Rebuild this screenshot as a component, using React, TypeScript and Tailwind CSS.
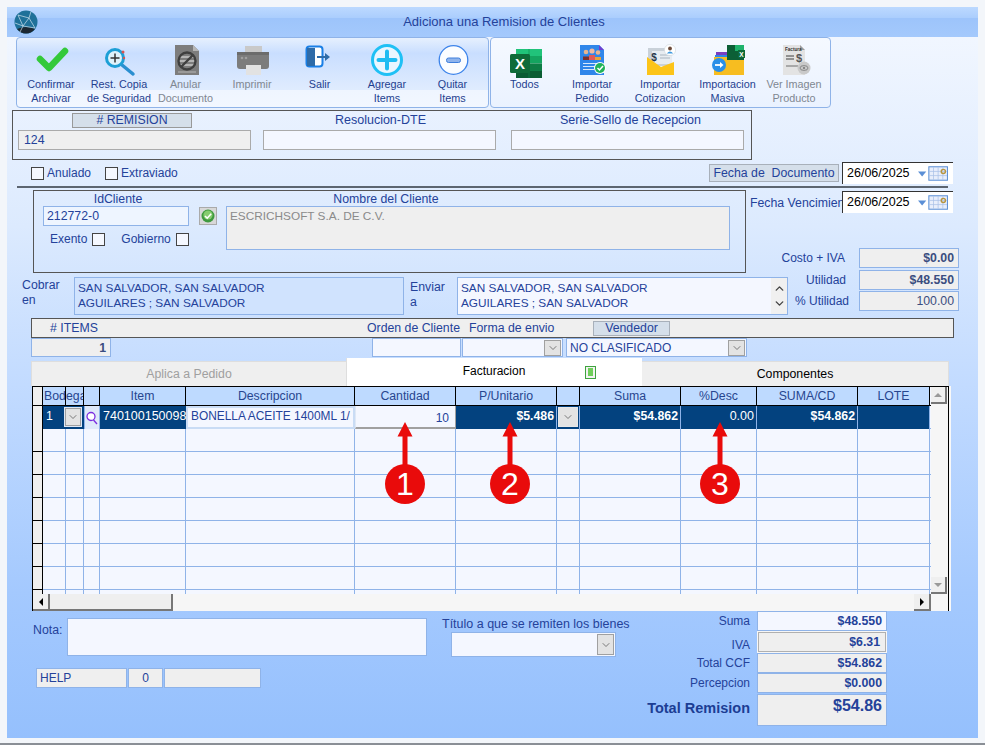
import React from 'react';
import { ChevronDown, ChevronUp } from 'lucide-react';

type IconProps = { children: React.ReactNode };
const Slot = ({ children }: IconProps) => (
  <svg width="40" height="40" viewBox="0 0 40 40" className="block mx-auto">{children}</svg>
);

const CheckIcon = () => (
  <Slot>
    <path d="M9 21 L18 30 L34 13" fill="none" stroke="#34c93a" strokeWidth="6.5" strokeLinecap="round" strokeLinejoin="round" />
  </Slot>
);
const SearchIcon = () => (
  <Slot>
    <path d="M23 27 L34 36" stroke="#2a8fd0" strokeWidth="3.5" strokeLinecap="round" />
    <circle cx="16" cy="20" r="8.5" fill="#dff3fb" stroke="#1d9fd6" strokeWidth="3" />
    <path d="M11.5 20 H20.5 M16 15.5 V24.5" stroke="#333" strokeWidth="1.5" />
    <circle cx="24" cy="14" r="1.5" fill="#d9534f" />
    <circle cx="25" cy="20" r="1.2" fill="#d9534f" />
  </Slot>
);
const AnularIcon = () => (
  <Slot>
    <path d="M9 7 H27 L33 13 V37 H9 Z" fill="#7d7d7d" />
    <path d="M27 7 L33 13 H27 Z" fill="#b5b5b5" />
    <path d="M13 19 H29 M13 23 H29 M13 27 H29" stroke="#c8c8c8" strokeWidth="1.5" />
    <circle cx="21" cy="23" r="8.5" fill="none" stroke="#3f3f3f" strokeWidth="2.4" />
    <path d="M15 29 L27 17" stroke="#3f3f3f" strokeWidth="2.4" />
    <path d="M12 34 H30" stroke="#b8b8b8" strokeWidth="1" />
  </Slot>
);
const PrinterIcon = () => (
  <Slot>
    <rect x="13" y="8" width="17" height="8" fill="#c9c9c9" />
    <rect x="5" y="14" width="32" height="17" rx="3" fill="#7c7c7c" />
    <rect x="5" y="14" width="32" height="3" fill="#6c6c6c" />
    <circle cx="10" cy="20" r="1.3" fill="#9f9f9f" />
    <circle cx="14" cy="20" r="1.3" fill="#9f9f9f" />
    <rect x="14" y="27" width="15" height="10" fill="#e2e2e2" />
  </Slot>
);
const ExitIcon = () => (
  <Slot>
    <rect x="6.5" y="8.5" width="16" height="20" rx="3" fill="#fff" stroke="#1a7fe6" strokeWidth="2" />
    <path d="M7 10 H15 V28 H7 Z" fill="#2e6ba8" />
    <path d="M17 19 H26" stroke="#2e6ba8" strokeWidth="2" />
    <path d="M25 15 L30 19 L25 23 Z" fill="#2e6ba8" />
  </Slot>
);
const PlusIcon = () => (
  <Slot>
    <circle cx="20" cy="22" r="14.5" fill="#eaf6ff" stroke="#1fc0f5" strokeWidth="3" />
    <path d="M11.5 22 H28.5 M20 13.5 V30.5" stroke="#1fbcf2" strokeWidth="4" strokeLinecap="round" />
  </Slot>
);
const MinusIcon = () => (
  <Slot>
    <circle cx="20.5" cy="22" r="14.3" fill="#fbfdff" stroke="#3d84ea" strokeWidth="1.3" />
    <rect x="13.5" y="20" width="14" height="4.5" rx="2" fill="#8fb4ec" stroke="#3f7fdc" strokeWidth="1" />
  </Slot>
);
const ExcelIcon = () => (
  <Slot>
    <rect x="11" y="11" width="26" height="7" fill="#21c37a" />
    <rect x="11" y="18" width="26" height="7.5" fill="#14a560" />
    <rect x="11" y="25.5" width="26" height="7.5" fill="#0d7d45" />
    <rect x="11" y="33" width="26" height="7" fill="#0a5c33" />
    <path d="M24 11 V40" stroke="#0e8a4e" strokeWidth="0.6" />
    <rect x="5" y="16" width="20" height="19" rx="1.5" fill="#0e6b39" />
    <text x="15" y="31" textAnchor="middle" fontSize="15" fontWeight="700" fill="#fff" fontFamily="Liberation Sans, sans-serif">X</text>
  </Slot>
);
const PedidoIcon = () => (
  <Slot>
    <path d="M8 7 H27 L32 12 V37 H8 Z" fill="#2f86ea" />
    <path d="M27 7 L32 12 H27 Z" fill="#6d3fd0" />
    <circle cx="14" cy="14" r="2.3" fill="#e8b48f" />
    <circle cx="20" cy="13" r="2.6" fill="#f0b8a0" />
    <circle cx="26" cy="14.5" r="2.3" fill="#e8b48f" />
    <path d="M11 22 V18.5 H17 V22 Z" fill="#7a2f2f" />
    <path d="M17 22 V17 H23 V22 Z" fill="#e05a5a" />
    <path d="M23 22 V19 H29 V22 Z" fill="#e8a23c" />
    <path d="M11 25.5 H29 M11 28.5 H27 M11 31.5 H22" stroke="#d7e8fc" strokeWidth="1" />
    <circle cx="28" cy="30" r="6" fill="#fff" />
    <circle cx="28" cy="30" r="5" fill="#22b35a" />
    <path d="M25.5 30 L27.5 32 L31 28" fill="none" stroke="#fff" strokeWidth="1.5" />
  </Slot>
);
const CotizIcon = () => (
  <Slot>
    <path d="M8 10 H32 V28 H8 Z" fill="#c9d1d9" />
    <rect x="12" y="13" width="20" height="13" fill="#e7ecf1" />
    <text x="14" y="23" textAnchor="middle" fontSize="10" fontWeight="700" fill="#27384a" fontFamily="Liberation Sans, sans-serif">$</text>
    <path d="M20 17 H30 M20 20 H30" stroke="#a9b4bf" strokeWidth="1" />
    <path d="M7 19 L21 29 L34 24 V37 H7 Z" fill="#fcc419" />
    <circle cx="30" cy="12" r="5.6" fill="#fff" stroke="#cfd6dc" strokeWidth="0.6" />
    <circle cx="30" cy="10.5" r="1.9" fill="#6b4a3a" />
    <path d="M26.8 15.5 Q30 11.5 33.2 15.5 Z" fill="#3f9ae0" />
  </Slot>
);
const MasivaIcon = () => (
  <Slot>
    <rect x="8" y="14" width="20" height="3" fill="#7a3fc0" />
    <rect x="7" y="17" width="22" height="3" fill="#2f86ea" />
    <path d="M6 19 H36 V37 H6 Z" fill="#f7bd20" />
    <path d="M19 7 H36 V22 H19 Z" fill="#0c5f36" />
    <path d="M27 7 H36 V13 H27 Z" fill="#1fb36c" />
    <rect x="30" y="12" width="7" height="8" fill="#0e6b39" />
    <text x="33.5" y="18.5" textAnchor="middle" fontSize="6.5" fontWeight="700" fill="#fff" fontFamily="Liberation Sans, sans-serif">X</text>
    <circle cx="11" cy="27" r="7" fill="#2a8fe8" />
    <path d="M7 27 H14" stroke="#fff" strokeWidth="1.8" />
    <path d="M12 24 L15.5 27 L12 30 Z" fill="#fff" />
  </Slot>
);
const ImagenIcon = () => (
  <Slot>
    <path d="M9 7 H26 L31 12 V37 H9 Z" fill="#e3e3e3" />
    <path d="M26 7 L31 12 H26 Z" fill="#9d9d9d" />
    <text x="11" y="12.5" fontSize="4.6" fontWeight="700" fill="#333" fontFamily="Liberation Sans, sans-serif">Factura</text>
    <path d="M12 18 H20 M12 21 H20" stroke="#777" strokeWidth="1.4" />
    <text x="25" y="24" textAnchor="middle" fontSize="11" fontWeight="700" fill="#555" fontFamily="Liberation Sans, sans-serif">$</text>
    <path d="M12 28 H24" stroke="#999" strokeWidth="1.6" />
    <circle cx="30" cy="30" r="6.5" fill="#c9c9c9" />
    <ellipse cx="30" cy="30" rx="4" ry="2.4" fill="none" stroke="#777" strokeWidth="0.8" />
    <circle cx="30" cy="30" r="1.1" fill="#777" />
  </Slot>
);

const Logo = () => (
  <svg width="24" height="24" viewBox="0 0 24 24" className="block">
    <circle cx="12" cy="12" r="11.5" fill="#1f7199" />
    <path d="M3 19 Q12 15 21 19 Q17 23.5 12 23.5 Q7 23.5 3 19 Z" fill="#1c2833" />
    <path d="M4 5 L15 8 L21 18 M15 8 L17 1.5 M4 5 L9 16 L21 18 M9 16 L15 8 M1 13 L9 16 L6 22" fill="none" stroke="#cfe3ee" strokeWidth="0.7" />
  </svg>
);

type BtnProps = { w: string; icon: React.ReactNode; lines: string[]; muted?: boolean };
const ToolBtn = ({ w, icon, lines, muted }: BtnProps) => (
  <div className={`${w} shrink-0 flex flex-col items-center`}>
    {icon}
    <div className={`-mt-px text-center text-[10.8px] leading-[14px] whitespace-nowrap ${muted ? 'text-[#7f8791]' : 'text-[#1f3f8f]'}`}>
      {lines.map((l) => (
        <div key={l}>{l}</div>
      ))}
    </div>
  </div>
);

const Check = () => <span className="block w-[13px] h-[13px] border border-[#444] bg-[#f5f8ff]" />;

const DateField = () => (
  <div className="w-[111px] h-[22px] bg-white border-l border-t border-[#333] flex items-center text-black text-[12.5px] pl-[4px]">
    <span>26/06/2025</span>
    <svg width="31" height="15" viewBox="0 0 30 14" className="ml-[8px]">
      <path d="M0 5 H8 L4 10 Z" fill="#5b8fd6" />
      <rect x="10.5" y="0.5" width="18" height="13" fill="#e8eefb" stroke="#5b8fd6" />
      <path d="M15 1 V13 M19.5 1 V13 M24 1 V13 M11 5 H28 M11 9 H28" stroke="#a9c0e8" strokeWidth="0.7" />
      <circle cx="24.5" cy="5" r="2" fill="none" stroke="#b7953f" strokeWidth="1.4" />
    </svg>
  </div>
);

const Chev = ({ className }: { className: string }) => (
  <span className={`flex items-center justify-center bg-[#e3e3e3] border border-[#a0a0a0] text-[#555] ${className}`}>
    <ChevronDown size={12} strokeWidth={1.5} />
  </span>
);

const Stat = ({ label, value, gap, h, bold }: { label: string; value: string; gap: string; h: string; bold?: boolean }) => (
  <div className={`flex items-center justify-end text-[12px] ${h}`}>
    <span className="whitespace-nowrap text-right">{label}</span>
    <span className={`${gap} w-[100px] h-[20px] shrink-0 bg-[#efefef] border border-[#8fb3e8] flex items-center justify-end pr-[4px] text-[12.3px] text-[#3a4d80] ${bold ? 'font-bold' : ''}`}>
      {value}
    </span>
  </div>
);

const HeaderCell = ({ text, align }: { text?: string; align?: string }) => (
  <div className={`bg-[#bedaff] border-r border-black flex items-center overflow-hidden whitespace-nowrap text-[#27468f] ${align ?? 'justify-center'}`}>
    {text}
  </div>
);

const rowCols = 'grid grid-cols-[10px_23px_18px_16px_86px_169px_101px_101px_23px_101px_76px_101px_72px]';

const EmptyRow = ({ h }: { h: string }) => (
  <div className={`${rowCols} ${h} border-b border-[#8fb3e8] last:border-b-0`}>
    <div className="bg-[#efefef] border-r border-b border-black -mb-px" />
    {Array.from({ length: 12 }).map((_, i) => (
      <div key={i} className="border-r border-[#8fb3e8]" />
    ))}
  </div>
);

const NavyCell = ({ text, bold }: { text?: string; bold?: boolean }) => (
  <div className={`bg-[#03427f] border-r border-[#8fb3e8] text-white text-right pr-[2px] leading-[21px] ${bold ? 'font-bold text-[12.3px]' : 'text-[12.5px]'}`}>
    {text}
  </div>
);

const Arrow = ({ x, n }: { x: string; n: string }) => (
  <div className={`absolute top-[36px] ${x} w-[40px] h-[83px]`}>
    <svg width="40" height="46" viewBox="0 0 40 46" className="block">
      <path d="M20 0 L27.5 14.5 L22.5 14.5 V46 H17.5 V14.5 L12.5 14.5 Z" fill="#e90b0b" />
    </svg>
    <div className="absolute top-[42px] left-0 w-[40px] h-[40px] rounded-full bg-[#e90b0b] text-white flex items-center justify-center text-[32px] leading-none">
      {n}
    </div>
  </div>
);

const Total = ({ label, value, h, pad, tall, inset, white }: { label: string; value: string; h: string; pad: string; tall?: boolean; inset?: boolean; white?: boolean }) => (
  <div className={`flex ${h}`}>
    <span className={`w-[127px] text-right pr-[7px] whitespace-nowrap ${pad} ${tall ? 'font-bold text-[14.5px] text-[#1c3d94]' : 'text-[12px]'}`}>{label}</span>
    <span
      className={`w-[130px] flex justify-end font-bold ${tall ? 'text-[16px] leading-[20px] pt-[1px] items-start' : 'text-[12.3px] items-center'} ${white ? 'bg-[#f4f7ff]' : 'bg-[#efefef]'} ${
        inset ? 'border-2 border-[#f7f7f7] outline outline-1 outline-[#b0b0b0] -outline-offset-2 pr-[5px]' : 'border border-[#8fb3e8] pr-[4px]'
      }`}
    >
      {value}
    </span>
  </div>
);

export default function App() {
  return (
    <div className="w-[985px] h-[745px] overflow-hidden bg-[#f3f6fa] border-b-2 border-[#8a8f96] pt-[7px] pl-[7px] text-[12.3px] text-[#24429a] font-['Liberation_Sans',sans-serif]">
      <div className="w-[971px] h-[731px] bg-[linear-gradient(180deg,#f4f8ff_0%,#dceafe_30%,#c4dcff_50%,#a4c9fe_80%,#95c0fd_100%)]">
        {/* title */}
        <div className="h-[30px] flex items-center pl-[7px] bg-[linear-gradient(180deg,#bcd9ff_0%,#aacdfd_38%,#9dc4fb_38%,#a4c9fc_100%)]">
          <Logo />
          <div className="w-[954px] -ml-[23px] text-center text-[13px] pl-[24px]">Adiciona una Remision de Clientes</div>
        </div>

        {/* toolbar */}
        <div className="h-[71px] ml-[9px] flex">
          <div className="w-[473px] h-[71px] flex border border-[#8fb3e8] rounded-[4px] bg-[linear-gradient(180deg,#e6f0fe_0%,#c9deff_22%,#e0ecfe_76%,#eff5ff_76%,#f2f7ff_100%)]">
            <ToolBtn w="w-[68px]" icon={<CheckIcon />} lines={['Confirmar', 'Archivar']} />
            <ToolBtn w="w-[68px]" icon={<SearchIcon />} lines={['Rest. Copia', 'de Seguridad']} />
            <ToolBtn w="w-[65px]" icon={<AnularIcon />} lines={['Anular', 'Documento']} muted />
            <ToolBtn w="w-[68px]" icon={<PrinterIcon />} lines={['Imprimir']} muted />
            <ToolBtn w="w-[67px]" icon={<ExitIcon />} lines={['Salir']} />
            <ToolBtn w="w-[68px]" icon={<PlusIcon />} lines={['Agregar', 'Items']} />
            <ToolBtn w="w-[63px]" icon={<MinusIcon />} lines={['Quitar', 'Items']} />
          </div>
          <div className="w-[341px] h-[71px] ml-px flex border border-[#8fb3e8] rounded-[4px] bg-[linear-gradient(180deg,#f5f9ff_0%,#eaf2ff_100%)]">
            <ToolBtn w="w-[67px]" icon={<ExcelIcon />} lines={['Todos']} />
            <ToolBtn w="w-[68px]" icon={<PedidoIcon />} lines={['Importar', 'Pedido']} />
            <ToolBtn w="w-[68px]" icon={<CotizIcon />} lines={['Importar', 'Cotizacion']} />
            <ToolBtn w="w-[67px]" icon={<MasivaIcon />} lines={['Importacion', 'Masiva']} />
            <ToolBtn w="w-[66px]" icon={<ImagenIcon />} lines={['Ver Imagen', 'Producto']} muted />
          </div>
        </div>

        {/* remision */}
        <div className="mt-[2px] ml-[5px] w-[740px] h-[50px] border border-[#555] flex pl-[5px] pt-[2px] gap-[12px]">
          <div className="w-[233px] shrink-0">
            <div className="ml-[54px] w-[120px] h-[15px] bg-[#d5dfea] border border-[#999] flex items-center justify-center">
              # REMISION
            </div>
            <div className="mt-[2px] h-[20px] bg-[#efefef] border border-[#aaa] pl-[5px] leading-[19px]">124</div>
          </div>
          <div className="w-[233px] shrink-0">
            <div className="h-[15px] text-center leading-[14px] pl-[2px] text-[12.5px]">Resolucion-DTE</div>
            <div className="mt-[2px] h-[20px] bg-[#f4f7ff] border border-[#aaa]" />
          </div>
          <div className="w-[233px] shrink-0 ml-[3px]">
            <div className="h-[15px] text-center leading-[14px] pl-[6px] text-[12.5px]">Serie-Sello de Recepcion</div>
            <div className="mt-[2px] h-[20px] bg-[#f4f7ff] border border-[#aaa]" />
          </div>
        </div>

        {/* anulado row */}
        <div className="h-[26px] flex pl-[24px] pr-[25px] items-center">
          <Check />
          <span className="ml-[3px] text-[12px]">Anulado</span>
          <span className="ml-[14px]"><Check /></span>
          <span className="ml-[3px] text-[12px]">Extraviado</span>
          <div className="ml-auto flex items-center">
            <span className="w-[130px] h-[18px] bg-[#d5dfea] border border-[#a8b0ba] flex items-center justify-center whitespace-pre">Fecha de  Documento</span>
            <span className="ml-[3px]"><DateField /></span>
          </div>
        </div>
        <div className="ml-[10px] w-[931px] h-[2px] bg-[#5c6570]" />

        {/* client + right column */}
        <div className="flex h-[130px]">
          <div className="w-[783px] shrink-0">
            <div className="mt-[2px] ml-[26px] w-[713px] h-[83px] border border-[#555] flex pl-[9px] pt-[1px]">
              <div className="w-[146px] shrink-0">
                <div className="h-[14px] leading-[14px] text-center pl-[4px]">IdCliente</div>
                <div className="h-[20px] bg-[#eef5ff] border border-[#8fb3e8] pl-[3px] leading-[18px]">212772-0</div>
                <div className="flex items-center mt-[4px] pl-[7px] text-[12px]">
                  <span>Exento</span>
                  <span className="ml-[5px]"><Check /></span>
                  <span className="ml-[16px]">Gobierno</span>
                  <span className="ml-[5px]"><Check /></span>
                </div>
              </div>
              <div className="w-[18px] h-[18px] ml-[10px] mt-[15px] shrink-0 bg-[#d8d8d8] border border-[#aaa] flex items-center justify-center">
                <svg width="14" height="14" viewBox="0 0 14 14">
                  <circle cx="7" cy="7" r="6.5" fill="#3f9a3f" />
                  <circle cx="7" cy="6" r="4.6" fill="#86cc6e" />
                  <path d="M4 7 L6.2 9.2 L10.2 4.8" fill="none" stroke="#fff" strokeWidth="1.6" />
                </svg>
              </div>
              <div className="w-[504px] ml-[9px] shrink-0">
                <div className="h-[14px] leading-[14px] text-center pr-[184px]">Nombre del Cliente</div>
                <div className="h-[44px] bg-[#efefef] border border-[#8fb3e8] pl-[3px] leading-[18px] text-[#8a8a8a] text-[11.8px]">ESCRICHSOFT S.A. DE C.V.</div>
              </div>
            </div>
            <div className="mt-[4px] flex text-[11.8px]">
              <div className="w-[52px] ml-[15px] leading-[15px] pt-[1px] text-[12.3px]">Cobrar<br />en</div>
              <div className="w-[330px] h-[38px] ml-0 bg-[#d0e3fe] border border-[#8fb3e8] pl-[3px] pt-[3px] leading-[15px]">
                SAN SALVADOR, SAN SALVADOR<br />AGUILARES ; SAN SALVADOR
              </div>
              <div className="w-[47px] ml-[6px] pt-[3px] leading-[15px] text-[12.3px]">Enviar<br />a</div>
              <div className="w-[331px] h-[38px] bg-[#f4f7ff] border border-[#8fb3e8] flex">
                <div className="flex-1 pl-[3px] pt-[3px] leading-[15px]">
                  SAN SALVADOR, SAN SALVADOR<br />AGUILARES ; SAN SALVADOR
                </div>
                <div className="w-[16px] bg-[#f0f0f0] flex flex-col items-center justify-between py-[4px] text-[#444]">
                  <ChevronUp size={13} strokeWidth={2.6} />
                  <ChevronDown size={13} strokeWidth={2.6} />
                </div>
              </div>
            </div>
          </div>
          <div className="w-[169px] shrink-0">
            <div className="-ml-[40px] w-[203px] mt-[3px] flex items-start">
              <span className="w-[92px] whitespace-nowrap pt-[3px]">Fecha Vencimien</span>
              <DateField />
            </div>
            <div className="mt-[34px] -ml-[9px]">
              <Stat label="Costo + IVA" value="$0.00" gap="ml-[14px]" h="h-[22px]" bold />
              <Stat label="Utilidad" value="$48.550" gap="ml-[13px]" h="h-[22px]" bold />
              <Stat label="% Utilidad" value="100.00" gap="ml-[10px]" h="h-[20px]" />
            </div>
          </div>
        </div>

        {/* items header */}
        <div className="ml-[24px] w-[923px] h-[20px] bg-[#efefef] border border-[#555] flex items-center">
          <span className="w-[335px] pl-[18px] shrink-0"># ITEMS</span>
          <span className="w-[102px] shrink-0 whitespace-nowrap">Orden de Cliente</span>
          <span className="w-[124px] shrink-0 whitespace-nowrap">Forma de envio</span>
          <span className="w-[77px] h-[15px] shrink-0 bg-[#d5dfea] border border-[#a8b0ba] flex items-center justify-center">Vendedor</span>
        </div>
        <div className="ml-[24px] h-[19px] flex">
          <div className="w-[80px] h-[19px] bg-[#efefef] border border-[#8fb3e8] text-right pr-[4px] font-bold text-[#3a4d80] leading-[18px]">1</div>
          <div className="ml-[261px] w-[89px] h-[19px] bg-[#f4f7ff] border border-[#8fb3e8]" />
          <div className="ml-px w-[101px] h-[19px] bg-[#f4f7ff] border border-[#8fb3e8] flex items-center justify-end pr-px">
            <Chev className="w-[17px] h-[16px]" />
          </div>
          <div className="ml-[3px] w-[181px] h-[19px] bg-[#f4f7ff] border border-[#8fb3e8] flex items-center justify-between pl-[3px] pr-px text-[12px]">
            <span>NO CLASIFICADO</span>
            <Chev className="w-[17px] h-[16px]" />
          </div>
        </div>

        {/* tabs */}
        <div className="ml-[24px] h-[29px] flex items-end">
          <div className="w-[315px] h-[25px] bg-[#efefef] border-t border-l border-[#dedede] flex items-center justify-center text-[#a0a0a0]">Aplica a Pedido</div>
          <div className="w-[296px] h-[28px] bg-white border-l border-[#dedede] flex items-center text-black text-[12px]">
            <span className="w-[294px] text-center -mt-[2px]">Facturacion</span>
            <span className="-ml-[56px] w-[11px] h-[13px] bg-[#f2f2f2] border border-[#3fa33f] flex items-center justify-center">
              <span className="block w-[5px] h-[8px] bg-[#6fce5a]" />
            </span>
          </div>
          <div className="w-[307px] h-[25px] bg-[#efefef] border-t border-r border-[#dedede] flex items-center justify-center text-black">Componentes</div>
        </div>

        {/* grid */}
        <div className="relative ml-[25px] w-[919px] h-[225px] bg-[#f8f8f8]">
          <div className="w-[917px] h-[225px] border-l border-t border-r border-black flex flex-col">
            <div className="h-[207px] flex overflow-hidden">
              <div className="w-[898px] bg-[#f4f7ff]">
                <div className={`${rowCols} h-[19px] border-b border-black`}>
                  <div className="bg-[#efefef] border-r border-black" />
                  <HeaderCell text="Bod" align="justify-start pl-px" />
                  <HeaderCell text="ega" align="justify-start" />
                  <HeaderCell />
                  <HeaderCell text="Item" />
                  <HeaderCell text="Descripcion" />
                  <HeaderCell text="Cantidad" />
                  <HeaderCell text="P/Unitario" />
                  <HeaderCell />
                  <HeaderCell text="Suma" />
                  <HeaderCell text="%Desc" />
                  <HeaderCell text="SUMA/CD" />
                  <HeaderCell text="LOTE" />
                </div>
                <div className={`${rowCols} h-[23px] border-b border-[#8fb3e8]`}>
                  <div className="bg-[#efefef] border-r border-b border-black -mb-px" />
                  <div className="bg-[#03427f] text-white pl-[3px] leading-[21px]">1</div>
                  <div className="bg-[#03427f] relative">
                    <span className="absolute -left-[2px] top-[1px] w-[18px] h-[20px] border border-[#dfe8f5] flex">
                      <Chev className="w-[16px] h-[18px]" />
                    </span>
                  </div>
                  <div className="bg-[#dfeafa] border-x border-[#8fb3e8] flex items-center justify-center">
                    <svg width="12" height="16" viewBox="0 0 12 16">
                      <circle cx="5" cy="6.5" r="4" fill="#fff" stroke="#7b2fe0" strokeWidth="1.3" />
                      <path d="M7.5 10 L11 14" stroke="#7b2fe0" strokeWidth="1.4" />
                    </svg>
                  </div>
                  <div className="bg-[#03427f] text-white pl-[3px] overflow-hidden whitespace-nowrap leading-[21px] text-[12.5px]">740100150098</div>
                  <div className="bg-[#f4f7ff] border-2 border-[#c9dcf5] pl-[3px] overflow-hidden whitespace-nowrap leading-[17px] text-[11.9px]">BONELLA ACEITE 1400ML 1/</div>
                  <div className="bg-[#f4f7ff] border-r border-b-2 border-[#a0a0a0] border-l border-l-[#dfe8f5] text-right pr-[6px] pt-[4px] leading-[17px] text-[12px]">10</div>
                  <NavyCell text="$5.486" bold />
                  <div className="bg-[#03427f] border-r border-[#8fb3e8] p-px">
                    <Chev className="w-full h-[20px] border-[#e8e8e8]" />
                  </div>
                  <NavyCell text="$54.862" bold />
                  <NavyCell text="0.00" />
                  <NavyCell text="$54.862" bold />
                  <NavyCell />
                </div>
                <EmptyRow h="h-[23px]" />
                <EmptyRow h="h-[23px]" />
                <EmptyRow h="h-[23px]" />
                <EmptyRow h="h-[23px]" />
                <EmptyRow h="h-[23px]" />
                <EmptyRow h="h-[23px]" />
                <EmptyRow h="h-[23px]" />
                <EmptyRow h="h-[5px]" />
              </div>
              <div className="w-[17px] flex flex-col justify-between bg-[#f6f6f6]">
                <div className="w-[16px] h-[17px] bg-[#efefef] border-r-2 border-b-2 border-[#777] flex items-center justify-center">
                  <span className="block w-0 h-0 border-x-[4px] border-x-transparent border-b-[4px] border-b-[#999]" />
                </div>
                <div className="w-[16px] h-[17px] bg-[#efefef] border-r-2 border-b-2 border-[#777] flex items-center justify-center">
                  <span className="block w-0 h-0 border-x-[4px] border-x-transparent border-t-[4px] border-t-[#999]" />
                </div>
              </div>
            </div>
            <div className="h-[17px] flex bg-[#f6f6f6]">
              <div className="w-[17px] h-[17px] bg-[#efefef] border-r-2 border-b-2 border-[#777] flex items-center justify-center">
                <span className="block w-0 h-0 border-y-[4px] border-y-transparent border-r-[4px] border-r-black" />
              </div>
              <div className="w-[123px] h-[17px] bg-[#efefef] border-r-2 border-b-2 border-[#777]" />
              <div className="w-[741px]" />
              <div className="w-[17px] h-[17px] bg-[#efefef] border-r-2 border-b-2 border-[#777] flex items-center justify-center">
                <span className="block w-0 h-0 border-y-[4px] border-y-transparent border-l-[4px] border-l-black" />
              </div>
            </div>
          </div>
          <Arrow x="left-[353px]" n="1" />
          <Arrow x="left-[458px]" n="2" />
          <Arrow x="left-[668px]" n="3" />
        </div>

        {/* bottom */}
        <div className="flex">
          <div className="w-[623px] shrink-0">
            <div className="flex">
              <span className="ml-[26px] w-[34px] mt-[10px] shrink-0">Nota:</span>
              <div className="w-[360px] h-[38px] mt-[7px] shrink-0 bg-[#f4f7ff] border border-[#8fb3e8]" />
              <div className="ml-[15px] mt-[5px] shrink-0">
                <div className="whitespace-nowrap leading-[16px] text-[12.5px]">Título a que se remiten los bienes</div>
                <div className="ml-[9px] w-[165px] h-[25px] bg-[#f4f7ff] border border-[#8fb3e8] flex items-center justify-end pr-[1px]">
                  <Chev className="w-[17px] h-[21px]" />
                </div>
              </div>
            </div>
            <div className="ml-[29px] mt-[11px] h-[20px] flex gap-px text-[12px]">
              <div className="w-[91px] bg-[#efefef] border border-[#8fb3e8] pl-[3px] leading-[18px]">HELP</div>
              <div className="w-[35px] bg-[#efefef] border border-[#8fb3e8] text-center leading-[18px]">0</div>
              <div className="w-[97px] bg-[#efefef] border border-[#8fb3e8]" />
            </div>
          </div>
          <div>
            <Total label="Suma" value="$48.550" h="h-[20px]" pad="pt-[1px]" white />
            <Total label="IVA" value="$6.31" h="h-[22px]" pad="pt-[5px]" inset />
            <Total label="Total CCF" value="$54.862" h="h-[20px]" pad="pt-px" />
            <Total label="Percepcion" value="$0.000" h="h-[20px]" pad="pt-px" />
            <div className="h-px" />
            <Total label="Total Remision" value="$54.86" h="h-[32px]" pad="pt-[4px]" tall />
          </div>
        </div>
      </div>
    </div>
  );
}
